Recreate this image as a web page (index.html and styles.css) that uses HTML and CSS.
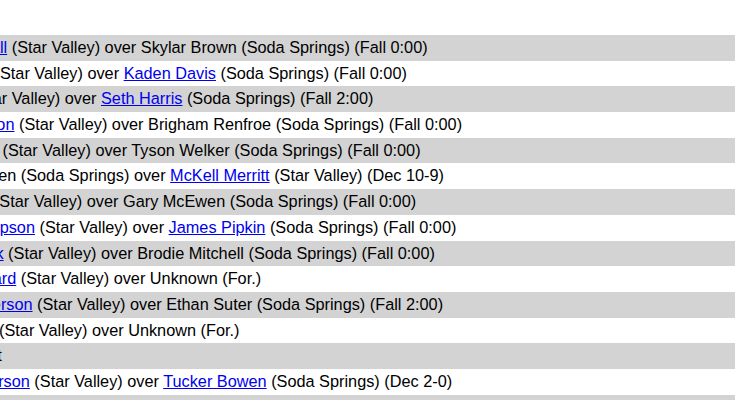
FILE: index.html
```html
<!DOCTYPE html>
<html>
<head>
<meta charset="utf-8">
<link rel="stylesheet" href="styles.css">
</head>
<body>
<div class="page">
  <div class="results">
    <div class="row odd"><a href="#">Dylan Marshall</a> (Star Valley) over Skylar Brown (Soda Springs) (Fall 0:00)</div>
    <div class="row">Cole Jensen (Star Valley) over <a href="#">Kaden Davis</a> (Soda Springs) (Fall 0:00)</div>
    <div class="row odd">Jake Cox (Star Valley) over <a href="#">Seth Harris</a> (Soda Springs) (Fall 2:00)</div>
    <div class="row"><a href="#">Hunter Johnson</a> (Star Valley) over Brigham Renfroe (Soda Springs) (Fall 0:00)</div>
    <div class="row odd">Wyatt Jensen (Star Valley) over Tyson Welker (Soda Springs) (Fall 0:00)</div>
    <div class="row">Braxton Hansen (Soda Springs) over <a href="#">McKell Merritt</a> (Star Valley) (Dec 10-9)</div>
    <div class="row odd">Luke Walker (Star Valley) over Gary McEwen (Soda Springs) (Fall 0:00)</div>
    <div class="row"><a href="#">Landon Thompson</a> (Star Valley) over <a href="#">James Pipkin</a> (Soda Springs) (Fall 0:00)</div>
    <div class="row odd"><a href="#">Brandon Clark</a> (Star Valley) over Brodie Mitchell (Soda Springs) (Fall 0:00)</div>
    <div class="row"><a href="#">Hayden Howard</a> (Star Valley) over Unknown (For.)</div>
    <div class="row odd"><a href="#">Jackson Anderson</a> (Star Valley) over Ethan Suter (Soda Springs) (Fall 2:00)</div>
    <div class="row">Cody Jensen (Star Valley) over Unknown (For.)</div>
    <div class="row odd">Double Forfeit</div>
    <div class="row"><a href="#">Brayden Peterson</a> (Star Valley) over <a href="#">Tucker Bowen</a> (Soda Springs) (Dec 2-0)</div>
    <div class="row odd">Double Forfeit</div>
  </div>
</div>
</body>
</html>
```

FILE: styles.css
```css
html, body {
  margin: 0;
  padding: 0;
  background: #ffffff;
}

.page {
  width: 735px;
  height: 400px;
  overflow: hidden;
  padding-top: 35px;
  box-sizing: border-box;
  font-family: "Liberation Sans", Arial, sans-serif;
  font-size: 16.3px;
  color: #000000;
}

.results {
  margin-left: -100.5px;
}

.row {
  height: 25.7px;
  line-height: 25.7px;
  white-space: nowrap;
  background: #ffffff;
}

.row.odd {
  background: #d3d3d3;
}

.row a {
  color: #0000ee;
  text-decoration: underline;
}
```
